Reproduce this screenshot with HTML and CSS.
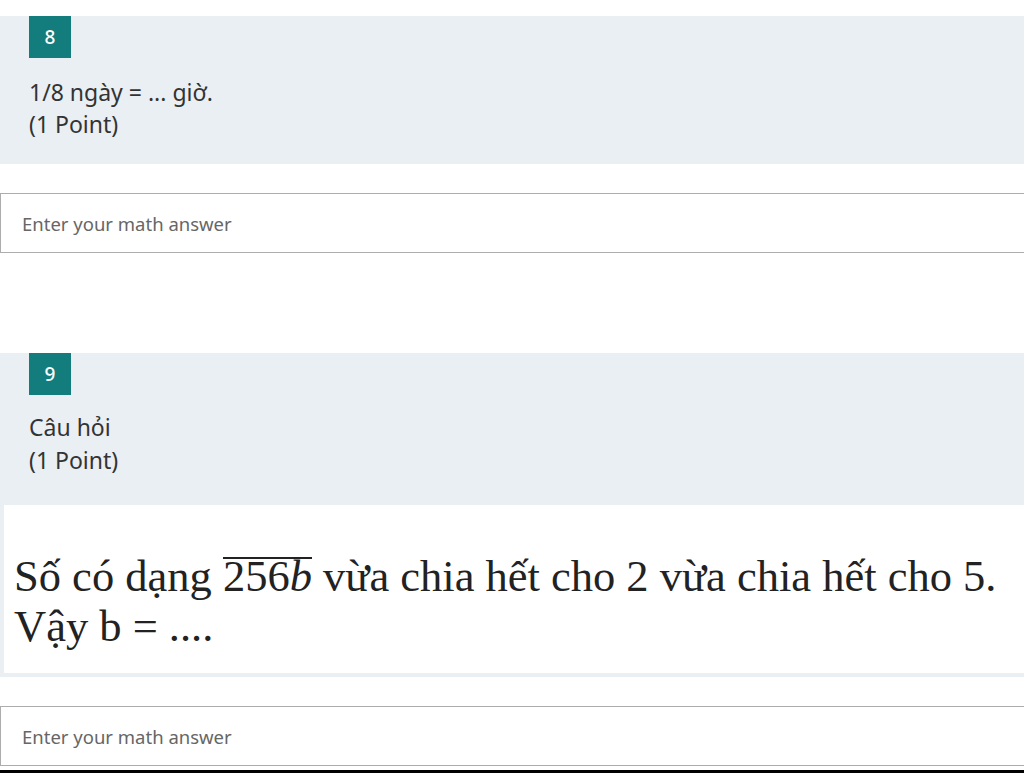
FILE: index.html
```html
<html lang="en">
  <head>
    <meta charset="utf-8">
    <title>Math Quiz</title>
    <link rel="stylesheet" href="styles.css">
  </head>

  <body>
    <div class="question">
      <div class="question-head">
        <div class="badge">8</div>
        <div class="title">
          <div>1/8 ngày = ... giờ.</div>
          <div>(1 Point)</div>
        </div>
      </div>
      <input class="answer" type="text" placeholder="Enter your math answer">
    </div>

    <div class="question second">
      <div class="question-head">
        <div class="badge">9</div>
        <div class="title">
          <div>Câu hỏi</div>
          <div>(1 Point)</div>
        </div>
        <div class="picture">
          <div>Số có dạng <span class="bar">256<i>b</i></span> vừa chia hết cho 2 vừa chia hết cho 5.</div>
          <div>Vậy b = ....</div>
        </div>
      </div>
      <input class="answer" type="text" placeholder="Enter your math answer">
    </div>

    <div class="bottom-line"></div>
  </body>
</html>
```

FILE: styles.css
```css
* {
  box-sizing: border-box;
}

body {
  margin: 0;
  padding-top: 16px;
  overflow: hidden;
  background-color: white;
  font-family: "Noto Sans", "Open Sans", sans-serif;
  color: #333;
}

.question {
  margin-bottom: 100px;
}

.question.second {
  margin-bottom: 0;
}

.question-head {
  background-color: #e9eff3;
  padding-bottom: 24px;
}

.second .question-head {
  padding-bottom: 4px;
}

.badge {
  width: 42px;
  height: 42px;
  margin-left: 29px;
  background-color: #137d7d;
  color: white;
  font-size: 19px;
  font-weight: 500;
  line-height: 42px;
  text-align: center;
}

.title {
  margin-top: 18px;
  margin-left: 29px;
  font-size: 23px;
  line-height: 32px;
}

.second .title {
  margin-top: 16px;
  line-height: 33px;
  margin-bottom: 28px;
}

.picture {
  margin-left: 4px;
  padding: 46px 10px 22px;
  background-color: white;
  font-family: "Liberation Serif", "DejaVu Serif", serif;
  font-size: 44.5px;
  line-height: 50px;
  white-space: nowrap;
  color: #222;
}

.bar {
  display: inline-block;
  line-height: 34px;
  border-top: 2px solid #222;
}

.answer {
  display: block;
  width: calc(100% + 10px);
  height: 60px;
  margin-top: 29px;
  padding: 0 21px;
  border: 1px solid #adadad;
  font-family: "Noto Sans", "Open Sans", sans-serif;
  font-size: 18.5px;
}

.answer::placeholder {
  color: #666;
}

.bottom-line {
  margin-top: 4px;
  height: 3px;
  background-color: black;
}
```
